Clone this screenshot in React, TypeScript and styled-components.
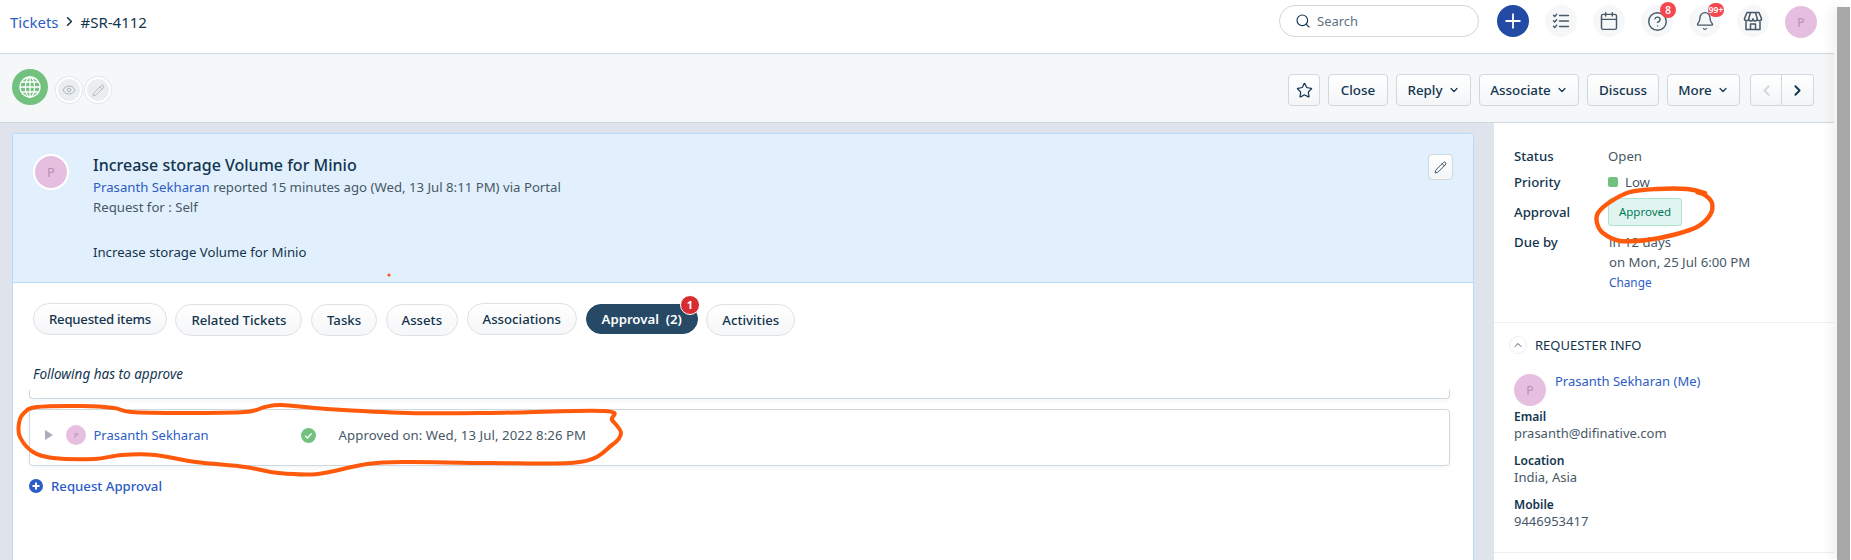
import React from 'react'
import styled, { createGlobalStyle } from 'styled-components'
import { Bell, Calendar, ChevronDown, ChevronLeft, ChevronRight, ChevronUp, CircleHelp, Eye, Pencil, Search, Star } from 'lucide-react'

const GlobalStyle = createGlobalStyle`
  html, body {
    margin: 0;
    padding: 0;
    background: #fff;
    color: #12344d;
    font-family: 'Noto Sans', 'Liberation Sans', sans-serif;
    font-size: 13.2px;
  }
  * { box-sizing: border-box; }
`

const Shell = styled.div`
  position: relative;
  display: flex;
  width: 1851px;
  height: 560px;
  overflow: hidden;
`

const Main = styled.div`
  width: 1837px;
  padding-right: 3px;
  display: flex;
  flex-direction: column;
`

const ScrollThumb = styled.div`
  width: 13px;
  margin-top: 7px;
  background: #a8a8a8;
  box-shadow: -6px 0 12px rgba(0, 0, 0, 0.06);
`

const TopBar = styled.header`
  height: 54px;
  flex: none;
  display: flex;
  align-items: flex-start;
  justify-content: space-between;
  padding: 5px 17px 0 10px;
  border-bottom: 1px solid #cfd7df;
`

const Crumbs = styled.div`
  display: flex;
  align-items: center;
  height: 33px;
  font-size: 15px;
`

const CrumbLink = styled.a`
  color: #2c5cc5;
`

const CrumbChevron = styled(ChevronRight)`
  margin: 0 3px 0 4px;
`

const TopRight = styled.div`
  display: flex;
  align-items: flex-start;
  gap: 16px;
`

const SearchBox = styled.div`
  width: 200px;
  height: 32px;
  margin-right: 2px;
  padding-left: 15px;
  display: flex;
  align-items: center;
  gap: 6px;
  border: 1px solid #cfd7df;
  border-radius: 16px;
  color: #5f7183;
  font-size: 13px;
`

const RoundIcon = styled.div<{ $primary?: boolean }>`
  position: relative;
  width: 32px;
  height: 32px;
  border-radius: 50%;
  display: flex;
  align-items: center;
  justify-content: center;
  background: ${p => (p.$primary ? '#234ba6' : '#f5f7f9')};
  color: ${p => (p.$primary ? '#fff' : '#475867')};
`

const CountBadge = styled.span<{ $wide?: boolean }>`
  position: absolute;
  top: ${p => (p.$wide ? '-2px' : '-3px')};
  right: -3px;
  width: 16px;
  height: ${p => (p.$wide ? '14px' : '16px')};
  border-radius: 8px;
  background: #f5474f;
  color: #fff;
  font-size: ${p => (p.$wide ? '8.5px' : '10px')};
  font-weight: 600;
  line-height: ${p => (p.$wide ? '14px' : '16px')};
  text-align: center;
  white-space: nowrap;
`

const Avatar = styled.div<{ $size: number; $ring?: boolean }>`
  flex: none;
  width: ${p => p.$size}px;
  height: ${p => p.$size}px;
  border-radius: 50%;
  background: #e6bfe0;
  border: ${p => (p.$ring ? '2px solid #fff' : 'none')};
  color: #b68fb4;
  font-size: ${p => Math.round(p.$size * 0.36)}px;
  display: flex;
  align-items: center;
  justify-content: center;
`

const HeaderAvatar = styled(Avatar)`
  margin-top: 1px;
`

const Toolbar = styled.div`
  height: 69px;
  flex: none;
  display: flex;
  justify-content: space-between;
  padding: 15px 20px 0 12px;
  background: #f5f7f9;
  border-bottom: 1px solid #cfd7df;
`

const ToolLeft = styled.div`
  display: flex;
  align-items: flex-start;
`

const GlobeDisc = styled.div`
  width: 36px;
  height: 36px;
  margin-right: 8px;
  border-radius: 50%;
  background: #72c17e;
  display: flex;
  align-items: center;
  justify-content: center;
`

const GhostCircle = styled.div`
  width: 26px;
  height: 26px;
  margin: 8px 3px 0 0;
  border-radius: 50%;
  background: #ebeef0;
  border: 2px solid #fff;
  box-shadow: 0 0 0 1px #e4e7ea;
  color: #a9b2ba;
  display: flex;
  align-items: center;
  justify-content: center;
`

const ToolRight = styled.div`
  display: flex;
  align-items: flex-start;
  gap: 8px;
  padding-top: 5px;
`

const ToolButton = styled.button<{ $w: number }>`
  width: ${p => p.$w}px;
  height: 32px;
  padding: 0;
  display: flex;
  align-items: center;
  justify-content: center;
  gap: 5px;
  border: 1px solid #cfd7df;
  border-radius: 4px;
  background: linear-gradient(#fff, #f3f5f7);
  color: #12344d;
  font-family: inherit;
  font-size: 13.4px;
  font-weight: 500;
`

const Pager = styled.div`
  display: flex;
  margin-left: 2px;
`

const PagerButton = styled(ToolButton)<{ $off?: boolean }>`
  color: ${p => (p.$off ? '#cfd7df' : '#12344d')};
  border-radius: ${p => (p.$off ? '4px 0 0 4px' : '0 4px 4px 0')};
  border-left-width: ${p => (p.$off ? '1px' : '0')};
`

const Body = styled.div`
  flex: 1;
  min-height: 0;
  display: flex;
  background: #dfe3eb;
`

const LeftArea = styled.div`
  width: 1494px;
  flex: none;
  padding: 10px 20px 0 12px;
  display: flex;
`

const Card = styled.section`
  flex: 1;
  display: flex;
  flex-direction: column;
  background: #fff;
  border: 1px solid #b8dafd;
  border-bottom: none;
  border-radius: 4px 4px 0 0;
`

const TicketHead = styled.div`
  height: 149px;
  flex: none;
  display: flex;
  padding: 20px 20px 0 20px;
  background: #e2f0fd;
  border-bottom: 1px solid #b8dafd;
  border-radius: 4px 4px 0 0;
`

const HeadText = styled.div`
  flex: 1;
  margin-left: 24px;
  padding-top: 1px;
`

const TicketTitle = styled.h1`
  margin: 0 0 2px;
  font-size: 16px;
  font-weight: 500;
  line-height: 20px;
`

const MetaLine = styled.div`
  color: #475867;
  line-height: 20px;
`

const Description = styled.div`
  margin-top: 25px;
  line-height: 20px;
`

const Link = styled.a<{ $small?: boolean }>`
  color: #2c5cc5;
  font-size: ${p => (p.$small ? '11.8px' : 'inherit')};
`

const EditButton = styled.button`
  width: 25px;
  height: 26px;
  padding: 0;
  display: flex;
  align-items: center;
  justify-content: center;
  border: 1px solid #cfd7df;
  border-radius: 4px;
  background: linear-gradient(#fff, #f3f5f7);
  color: #12344d;
`

const CardBody = styled.div`
  flex: 1;
  padding: 20px 23px 0 16px;
`

const PillRow = styled.div`
  display: flex;
  align-items: flex-start;
  gap: 8.5px;
  margin-left: 4px;
`

const Pill = styled.div<{ $active?: boolean; $lift?: boolean; $tight?: boolean }>`
  position: relative;
  height: ${p => (p.$active ? '30px' : '32px')};
  margin-top: ${p => (p.$lift ? '0' : '1px')};
  padding: 0 15px;
  display: flex;
  align-items: center;
  border-radius: 16px;
  border: 1px solid ${p => (p.$active ? '#264966' : '#dfe1e4')};
  background: ${p => (p.$active ? '#264966' : 'linear-gradient(#fff, #f5f6f8)')};
  color: ${p => (p.$active ? '#fff' : '#12344d')};
  font-size: 13.2px;
  font-weight: ${p => (p.$active ? 600 : 500)};
  letter-spacing: ${p => (p.$tight ? '-0.25px' : '0')};
  white-space: pre;
`

const PillBadge = styled.span`
  position: absolute;
  top: -10px;
  right: -3px;
  width: 20px;
  height: 20px;
  border-radius: 50%;
  border: 1px solid #fff;
  background: #d72d30;
  color: #fff;
  font-size: 11px;
  font-weight: 700;
  line-height: 18px;
  text-align: center;
`

const Hint = styled.div`
  margin: 28px 0 6px 4px;
  font-size: 13.5px;
  font-style: italic;
  line-height: 20px;
`

const StubBox = styled.div`
  height: 9px;
  border: 1px solid #cfd7df;
  border-top: none;
  border-radius: 0 0 4px 4px;
  box-shadow: 0 2px 4px rgba(18, 52, 77, 0.05);
`

const ApproverRow = styled.div`
  height: 57px;
  margin-top: 10px;
  padding: 0 0 5px 15px;
  display: flex;
  align-items: center;
  border: 1px solid #cfd7df;
  border-radius: 4px;
  box-shadow: 0 2px 4px rgba(18, 52, 77, 0.05);
`

const Caret = styled.span`
  width: 0;
  height: 0;
  margin-right: 13px;
  border-style: solid;
  border-width: 5px 0 5px 8px;
  border-color: transparent transparent transparent #a9aeb8;
`

const ApproverName = styled.a`
  width: 207px;
  margin-left: 7.5px;
  padding-right: 0.5px;
  color: #2c5cc5;
  font-size: 13px;
`

const ApprovedOn = styled.span`
  margin-left: 23px;
  color: #475867;
  letter-spacing: 0.08px;
`

const RequestLink = styled.a`
  margin-top: 10px;
  display: flex;
  align-items: center;
  gap: 8px;
  height: 20px;
  color: #2c5cc5;
  font-weight: 500;
`

const Sidebar = styled.aside`
  flex: 1;
  background: #fff;
`

const StatusSection = styled.div`
  height: 200px;
  padding: 23px 0 0 20px;
  display: grid;
  grid-template-columns: 94px 1fr;
  grid-auto-rows: min-content;
  row-gap: 6px;
  align-items: center;
  border-bottom: 1px solid #ebeff3;
  line-height: 20px;
`

const FieldLabel = styled.div`
  font-weight: 500;
  align-self: start;
`

const ApprovalLabel = styled(FieldLabel)`
  align-self: center;
`

const PlainValue = styled.div`
  color: #475867;
`

const PriorityValue = styled.div`
  display: flex;
  align-items: center;
  gap: 7px;
  color: #475867;
`

const PrioritySwatch = styled.span`
  width: 10px;
  height: 10px;
  border-radius: 2px;
  background: #72c17e;
`

const ApprovedTag = styled.span`
  width: 74px;
  height: 28px;
  display: flex;
  align-items: center;
  justify-content: center;
  border: 1px solid #b1e3d3;
  border-radius: 3px;
  background: #e0f5ef;
  color: #00795b;
  font-size: 11.5px;
`

const DueValue = styled(PlainValue)`
  padding-left: 1px;
`

const RequesterSection = styled.div`
  height: 230px;
  padding: 13px 0 0 20px;
  border-bottom: 1px solid #ebeff3;
`

const SectionTitle = styled.div`
  margin-left: -5px;
  height: 18px;
  display: flex;
  align-items: center;
  gap: 8px;
  font-size: 13px;
`

const CollapseDot = styled.span`
  width: 18px;
  height: 18px;
  border-radius: 50%;
  border: 1px solid #ebeff3;
  display: flex;
  align-items: center;
  justify-content: center;
  color: #475867;
`

const RequesterHead = styled.div`
  margin-top: 20px;
  display: flex;
  gap: 9px;
`

const RequesterName = styled.a`
  margin-top: -3px;
  height: 20px;
  line-height: 20px;
  color: #2c5cc5;
  font-size: 13px;
`

const InfoField = styled.div`
  margin-top: 12px;
  font-size: 12px;
  line-height: 16px;
`

const FirstInfoField = styled(InfoField)`
  margin-top: 3px;
`

const InfoLabel = styled.div`
  font-weight: 600;
`

const InfoValue = styled.div`
  color: #475867;
  font-size: 13px;
`

const InkLayer = styled.svg`
  position: absolute;
  left: 0;
  top: 0;
  pointer-events: none;
`

type Pt = [number, number]

// marker scribbles from the screenshot, closed catmull-rom through hand picked points
const rowScribble: Pt[] = [[19, 423], [24, 413], [37, 407], [82, 406], [114, 408], [131, 412], [184, 413], [245, 412], [265, 407], [282, 405], [327, 409], [408, 413], [490, 413], [604, 411], [612, 420], [621, 433], [612, 445], [580, 462], [490, 463], [408, 462], [367, 464], [318, 474], [278, 473], [245, 467], [196, 462], [155, 455], [122, 455], [94, 459], [53, 458], [33, 452], [20, 437]]
const tagScribble: Pt[] = [[1705, 193], [1687, 189], [1657, 189], [1630, 192], [1610, 202], [1598, 213], [1597, 223], [1603, 233], [1620, 241], [1647, 240], [1673, 235], [1697, 227], [1710, 215], [1712, 203], [1705, 195], [1697, 192]]

const splinePath = (pts: Pt[]) => {
  const at = (i: number) => pts[(i + pts.length) % pts.length]
  let d = `M${pts[0][0]} ${pts[0][1]}`
  pts.forEach((p, i) => {
    const [p0, p2, p3] = [at(i - 1), at(i + 1), at(i + 2)]
    const c1 = [p[0] + (p2[0] - p0[0]) / 6, p[1] + (p2[1] - p0[1]) / 6]
    const c2 = [p2[0] - (p3[0] - p[0]) / 6, p2[1] - (p3[1] - p[1]) / 6]
    d += ` C${c1[0]} ${c1[1]} ${c2[0]} ${c2[1]} ${p2[0]} ${p2[1]}`
  })
  return d
}

const GlobeIcon = () => (
  <svg width="24" height="24" viewBox="0 0 24 24" fill="none" stroke="#fff" strokeWidth="1.3">
    <circle cx="12" cy="12" r="10" />
    <ellipse cx="12" cy="12" rx="4.6" ry="10" />
    <path d="M12 2v20M2 12h20M3.5 7h17M3.5 17h17" />
  </svg>
)

const ChecklistIcon = () => (
  <svg width="18" height="18" viewBox="0 0 18 18" fill="none" stroke="#475867" strokeWidth="1.4" strokeLinecap="round">
    <path d="M7.5 3.5h9M7.5 9h9M7.5 14.5h9" />
    <path d="M1.5 3.2l1.2 1.2 2-2.2M1.5 8.7l1.2 1.2 2-2.2M1.5 14.2l1.2 1.2 2-2.2" />
  </svg>
)

const StoreIcon = () => (
  <svg width="20" height="20" viewBox="0 0 20 20" fill="none" stroke="#475867" strokeWidth="1.5" strokeLinejoin="round">
    <path d="M4 1.5h12l2.5 6a2.1 2.1 0 0 1-4.2.3 2.15 2.15 0 0 1-4.3 0 2.15 2.15 0 0 1-4.3 0 2.1 2.1 0 0 1-4.2-.3z" />
    <path d="M7.5 1.5l-1.8 6.3M12.5 1.5l1.8 6.3" />
    <path d="M3 10.5v8h14v-8M7.5 18.5v-5.5h5v5.5" />
  </svg>
)

const AddCircleIcon = () => (
  <svg width="14" height="14" viewBox="0 0 14 14">
    <circle cx="7" cy="7" r="7" fill="#2c5cc5" />
    <path d="M7 3.5v7M3.5 7h7" stroke="#fff" strokeWidth="2" />
  </svg>
)

const CheckDisc = () => (
  <svg width="15" height="15" viewBox="0 0 15 15" fill="none">
    <circle cx="7.5" cy="7.5" r="7.5" fill="#72c17e" />
    <path d="M4.2 7.8l2.2 2.2 4.3-4.6" stroke="#fff" strokeWidth="1.3" />
  </svg>
)

const pills = [
  { label: 'Requested items', lift: true, tight: true },
  { label: 'Related Tickets' },
  { label: 'Tasks' },
  { label: 'Assets' },
  { label: 'Associations', lift: true },
]

const App = () => (
  <Shell>
    <GlobalStyle />
    <Main>
      <TopBar>
        <Crumbs>
          <CrumbLink>Tickets</CrumbLink>
          <CrumbChevron size={15} strokeWidth={2.6} />
          <span>#SR-4112</span>
        </Crumbs>
        <TopRight>
          <SearchBox>
            <Search size={16} color="#12344d" strokeWidth={1.7} />
            Search
          </SearchBox>
          <RoundIcon $primary>
            <svg width="18" height="18" viewBox="0 0 18 18" stroke="#fff" strokeWidth="1.8"><path d="M9 1.5v15M1.5 9h15" /></svg>
          </RoundIcon>
          <RoundIcon><ChecklistIcon /></RoundIcon>
          <RoundIcon><Calendar size={20} strokeWidth={1.7} /></RoundIcon>
          <RoundIcon>
            <CircleHelp size={21} strokeWidth={1.6} />
            <CountBadge>8</CountBadge>
          </RoundIcon>
          <RoundIcon>
            <Bell size={20} strokeWidth={1.6} />
            <CountBadge $wide>99+</CountBadge>
          </RoundIcon>
          <RoundIcon><StoreIcon /></RoundIcon>
          <HeaderAvatar $size={32}>P</HeaderAvatar>
        </TopRight>
      </TopBar>
      <Toolbar>
        <ToolLeft>
          <GlobeDisc><GlobeIcon /></GlobeDisc>
          <GhostCircle><Eye size={14} strokeWidth={1.6} /></GhostCircle>
          <GhostCircle><Pencil size={13} strokeWidth={1.6} /></GhostCircle>
        </ToolLeft>
        <ToolRight>
          <ToolButton $w={32}><Star size={17} strokeWidth={1.7} /></ToolButton>
          <ToolButton $w={60}>Close</ToolButton>
          <ToolButton $w={75}>Reply <ChevronDown size={12} strokeWidth={2.4} /></ToolButton>
          <ToolButton $w={100}>Associate <ChevronDown size={12} strokeWidth={2.4} /></ToolButton>
          <ToolButton $w={72}>Discuss</ToolButton>
          <ToolButton $w={73}>More <ChevronDown size={12} strokeWidth={2.4} /></ToolButton>
          <Pager>
            <PagerButton $w={32} $off><ChevronLeft size={17} strokeWidth={2.6} /></PagerButton>
            <PagerButton $w={32}><ChevronRight size={17} strokeWidth={2.6} /></PagerButton>
          </Pager>
        </ToolRight>
      </Toolbar>
      <Body>
        <LeftArea>
          <Card>
            <TicketHead>
              <Avatar $size={36} $ring>P</Avatar>
              <HeadText>
                <TicketTitle>Increase storage Volume for Minio</TicketTitle>
                <MetaLine><Link>Prasanth Sekharan</Link> reported 15 minutes ago (Wed, 13 Jul 8:11 PM) via Portal</MetaLine>
                <MetaLine>Request for : Self</MetaLine>
                <Description>Increase storage Volume for Minio</Description>
              </HeadText>
              <EditButton><Pencil size={13} strokeWidth={1.5} /></EditButton>
            </TicketHead>
            <CardBody>
              <PillRow>
                {pills.map(p => (
                  <Pill key={p.label} $lift={p.lift} $tight={p.tight}>{p.label}</Pill>
                ))}
                <Pill $active>
                  {'Approval  (2)'}
                  <PillBadge>1</PillBadge>
                </Pill>
                <Pill>Activities</Pill>
              </PillRow>
              <Hint>Following has to approve</Hint>
              <StubBox />
              <ApproverRow>
                <Caret />
                <Avatar $size={20}>P</Avatar>
                <ApproverName>Prasanth Sekharan</ApproverName>
                <CheckDisc />
                <ApprovedOn>Approved on: Wed, 13 Jul, 2022 8:26 PM</ApprovedOn>
              </ApproverRow>
              <RequestLink><AddCircleIcon />Request Approval</RequestLink>
            </CardBody>
          </Card>
        </LeftArea>
        <Sidebar>
          <StatusSection>
            <FieldLabel>Status</FieldLabel>
            <PlainValue>Open</PlainValue>
            <FieldLabel>Priority</FieldLabel>
            <PriorityValue><PrioritySwatch />Low</PriorityValue>
            <ApprovalLabel>Approval</ApprovalLabel>
            <ApprovedTag>Approved</ApprovedTag>
            <FieldLabel>Due by</FieldLabel>
            <DueValue>
              in 12 days<br />
              on Mon, 25 Jul 6:00 PM<br />
              <Link $small>Change</Link>
            </DueValue>
          </StatusSection>
          <RequesterSection>
            <SectionTitle>
              <CollapseDot><ChevronUp size={12} /></CollapseDot>
              REQUESTER INFO
            </SectionTitle>
            <RequesterHead>
              <Avatar $size={32}>P</Avatar>
              <RequesterName>Prasanth Sekharan (Me)</RequesterName>
            </RequesterHead>
            <FirstInfoField>
              <InfoLabel>Email</InfoLabel>
              <InfoValue>prasanth@difinative.com</InfoValue>
            </FirstInfoField>
            <InfoField>
              <InfoLabel>Location</InfoLabel>
              <InfoValue>India, Asia</InfoValue>
            </InfoField>
            <InfoField>
              <InfoLabel>Mobile</InfoLabel>
              <InfoValue>9446953417</InfoValue>
            </InfoField>
          </RequesterSection>
        </Sidebar>
      </Body>
    </Main>
    <ScrollThumb />
    <InkLayer width="1851" height="560" fill="none" stroke="#ff5a0c" strokeLinejoin="round">
      <path d={splinePath(rowScribble)} strokeWidth="4" />
      <path d={splinePath(tagScribble)} strokeWidth="4.4" />
      <circle cx="389" cy="275" r="1.6" fill="#ff5a0c" stroke="none" />
    </InkLayer>
  </Shell>
)

export default App
